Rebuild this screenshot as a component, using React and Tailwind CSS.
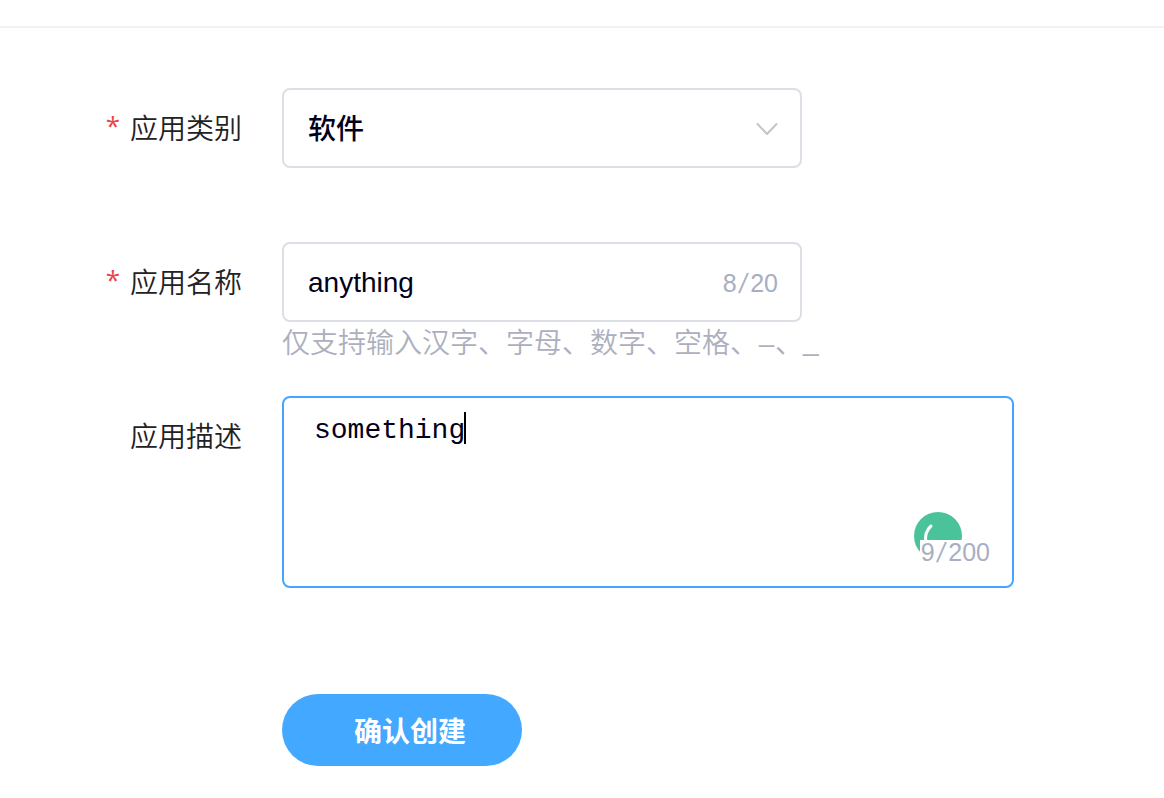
import React from "react";

function Row({ label, required, children }) {
  return (
    <div className="flex items-start">
      <label className="mr-10 flex h-20 w-[242px] shrink-0 items-center justify-end pt-[3px] text-[28px] font-[350] text-[#222]">
        {required && <span className="mr-[10px] mb-[9px] font-['Open_Sans','Noto_Sans'] text-[26px] leading-none font-normal text-[#e8444a]">*</span>}
        {label}
      </label>
      {children}
    </div>
  );
}

function Counter({ value, max }) {
  return (
    <span className="font-['Liberation_Sans',sans-serif] text-[25px] leading-7 text-[#a8afc2]">
      {value}
      <span className="mx-[3.3px] inline-block -skew-x-12 scale-y-110">/</span>
      {max}
    </span>
  );
}

export default function App() {
  return (
    <main className="h-[798px] w-[1164px] overflow-hidden bg-white font-['Liberation_Sans','Noto_Sans_CJK_SC',sans-serif]">
      <header className="h-7 border-b-2 border-[#f2f2f2]" />
      <form className="flex flex-col pt-[60px]">
        <Row label="应用类别" required>
          <div className="flex h-20 w-[520px] items-center justify-between rounded-lg border-2 border-[#dcdfe6] pt-[2px] pr-[22px] pl-6 text-[28px] text-[#00001c]">
            <span className="pb-[5px] font-['Noto_Sans_CJK_SC',sans-serif] leading-10 font-medium">软件</span>
            <svg width="22" height="14" viewBox="0 0 22 14" fill="none" stroke="#c0c4cc" strokeWidth="2" strokeLinecap="round" strokeLinejoin="round">
              <path d="M1.5 2 11 12 20.5 2" />
            </svg>
          </div>
        </Row>
        <div className="mt-[74px] h-[154px]">
          <Row label="应用名称" required>
            <div>
              <div className="flex h-20 w-[520px] items-center justify-between rounded-lg border-2 border-[#dcdfe6] pt-px pr-[22px] pl-6 text-[28px] text-[#00001c]">
                <span>anything</span>
                <Counter value="8" max="20" />
              </div>
              <p className="h-10 pt-[2px] text-[28px] leading-10 font-[350] whitespace-nowrap text-[#adafbe]">
                仅支持输入汉字、字母、数字、空格、<span className="inline-block w-[17px] text-center">–</span>、
                <span className="inline-block -translate-y-[3px]">_</span>
              </p>
            </div>
          </Row>
        </div>
        <Row label="应用描述">
          <div className="relative h-48 w-[732px] rounded-lg border-2 border-[#46a6ff] pt-[14px] pl-[30px] text-[28px] text-[#00001c]">
            <div className="flex h-8 items-center font-['Courier_New','Liberation_Mono',monospace] leading-8">
              <span className="pt-[5px]">something</span>
              <span className="-ml-px h-8 w-[2px] shrink-0 bg-black" />
            </div>
            <svg className="absolute top-[114px] left-[630px]" width="48" height="48" viewBox="0 0 48 48">
              <circle cx="24" cy="24" r="24" fill="#4bc39a" />
              <path d="M17 14Q10 20 12 31" fill="none" stroke="white" strokeWidth="3" strokeLinecap="round" />
            </svg>
            <div className="absolute top-[142px] right-[22px] flex h-6 w-[70px] items-center justify-end bg-white">
              <Counter value="9" max="200" />
            </div>
          </div>
        </Row>
        <button type="button" className="mt-[106px] ml-[282px] flex h-[72px] w-60 items-center rounded-full bg-[#43a8ff] pt-[5px] pl-[72px] text-[28px] font-bold text-white">
          确认创建
        </button>
      </form>
    </main>
  );
}
